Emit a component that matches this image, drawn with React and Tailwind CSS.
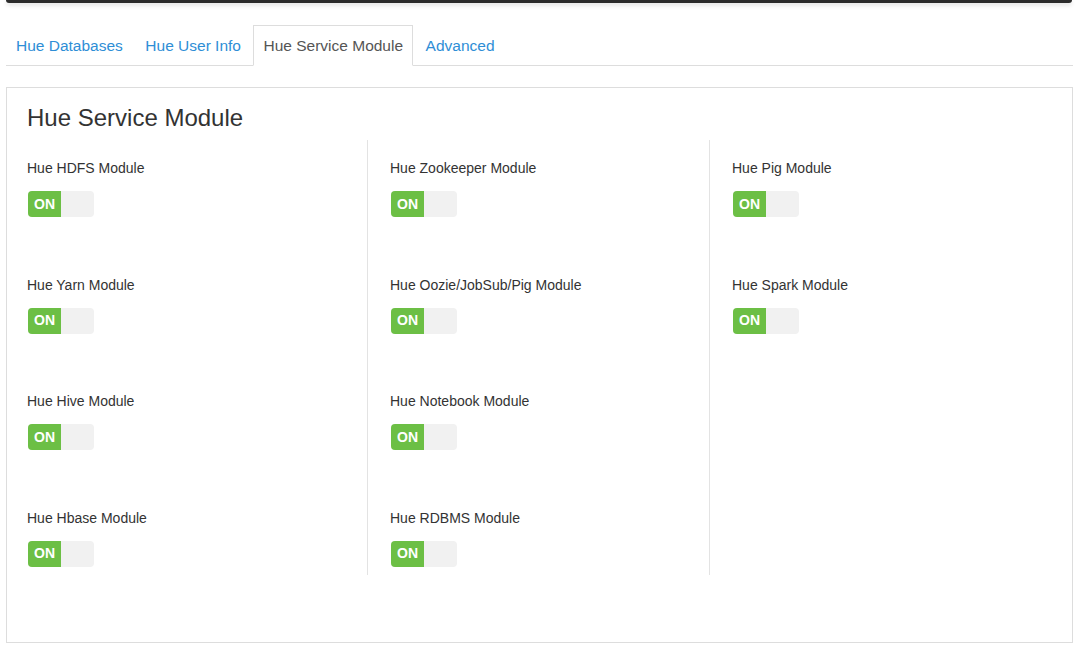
import React from 'react';

const tabs = ['Hue Databases', 'Hue User Info', 'Hue Service Module', 'Advanced'];

const columns = [
  ['Hue HDFS Module', 'Hue Yarn Module', 'Hue Hive Module', 'Hue Hbase Module'],
  ['Hue Zookeeper Module', 'Hue Oozie/JobSub/Pig Module', 'Hue Notebook Module', 'Hue RDBMS Module'],
  ['Hue Pig Module', 'Hue Spark Module'],
];

const Toggle = () => (
  <div className="ml-px mt-[13px] flex h-[26px] w-[66px] overflow-hidden rounded-[4px] bg-[#f1f1f1]">
    <div className="flex w-[33px] items-center justify-center bg-[#6cbf45] text-[14px] font-bold text-white">ON</div>
  </div>
);

const ModuleItem = ({ label }) => (
  <div className="flex flex-col">
    <div className="h-[20px] text-[14px] leading-[20px] text-[#333]">{label}</div>
    <Toggle />
  </div>
);

const App = () => {
  const active = 'Hue Service Module';

  return (
    <div className="min-h-[658px] bg-white" style={{ fontFamily: '"Liberation Sans", Arial, sans-serif' }}>
      <div className="ml-[6px] mr-[8px] h-[3px] rounded-b-[3px] bg-[#2c2c2c] shadow-[0_2px_4px_rgba(0,0,0,0.15)]" />

      <ul className="ml-[6px] mr-[7px] mt-[22px] flex border-b border-[#ddd]">
        {tabs.map((t) => (
          <li key={t} className="-mb-px mr-[2.5px]">
            <a
              className={
                t === active
                  ? 'block border border-[#ddd] border-b-white bg-white px-[9px] py-[9px] text-[15.5px] leading-[21px] text-[#555]'
                  : 'block border border-transparent px-[9px] py-[9px] text-[15.5px] leading-[21px] text-[#2e8ed6]'
              }
            >
              {t}
            </a>
          </li>
        ))}
      </ul>

      <div className="ml-[6px] mr-[7px] mt-[21px] h-[556px] border border-[#ddd] px-[20px] pt-[17px]">
        <h3 className="text-[24px] leading-[26px] text-[#333]">Hue Service Module</h3>
        <div className="mt-[9px] grid grid-cols-[341px_342px_342px]">
          {columns.map((col, i) => (
            <div
              key={i}
              className={
                (i < 2 ? 'border-r border-[#e3e3e3] ' : '') +
                (i > 0 ? 'pl-[22px] ' : '') +
                'flex flex-col gap-[57.67px] pb-[8px] pt-[18px]'
              }
            >
              {col.map((m) => (
                <ModuleItem key={m} label={m} />
              ))}
            </div>
          ))}
        </div>
      </div>
    </div>
  );
};

export default App;
